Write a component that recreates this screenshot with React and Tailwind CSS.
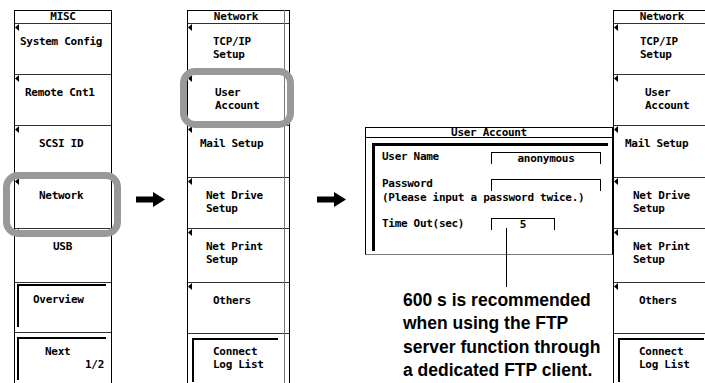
import React from "react";

const mono = "font-['DejaVu_Sans_Mono',monospace] font-bold text-[11px] tracking-[-0.3px] text-black";

const menu1 = [
  { h: "h-[51px]", lines: ["System Config"], pl: "pl-[5px]" },
  { h: "h-[51px]", lines: ["Remote Cnt1"], pl: "pl-[10px]" },
  { h: "h-[52px]", lines: ["SCSI ID"], pl: "pl-[24px]" },
  { h: "h-[51px]", lines: ["Network"], pl: "pl-[24px]" },
  { h: "h-[54px]", lines: ["USB"], pl: "pl-[38px]" },
  { h: "h-[50px]", lines: ["Overview"], button: true, box: "ml-[2px] mt-[1px] mr-[5px] h-[43px]", pl: "pl-[14px] pt-[7px]" },
  { h: "h-[52px]", lines: ["Next"], sub: "1/2", button: true, box: "ml-[2px] mt-[4px] mr-[5px] h-[43px]", pl: "pl-[26px] pr-[2px] pt-[6px]" },
];

const netItems = (shift) => [
  { h: "h-[51px]", lines: ["TCP/IP", "Setup"], pl: shift ? "pl-[26px]" : "pl-[25px]" },
  { h: "h-[51px]", lines: ["User", "Account"], pl: shift ? "pl-[31px]" : "pl-[27px]" },
  { h: "h-[52px]", lines: ["Mail Setup"], pl: shift ? "pl-[11px]" : "pl-[12px]" },
  { h: "h-[51px]", lines: ["Net Drive", "Setup"], pl: shift ? "pl-[19px]" : "pl-[18px]" },
  { h: "h-[54px]", lines: ["Net Print", "Setup"], pl: shift ? "pl-[19px]" : "pl-[18px]" },
  { h: "h-[51px]", lines: ["Others"], pl: "pl-[25px]" },
  {
    h: "h-[52px]",
    lines: ["Connect", "Log List"],
    button: true,
    box: shift ? "ml-[4px] mt-[4px] mr-[6px] h-[44px]" : "ml-[4px] mt-[4px] mr-[11px] h-[44px]",
    pl: "pl-[19px] pt-[5px]",
  },
];

function Marker() {
  return (
    <svg width="4" height="7" viewBox="0 0 4 7" className="absolute left-0 top-0">
      <path d="M0 3.5L4 0V7Z" fill="#000" />
    </svg>
  );
}

function Item({ item }) {
  if (item.button) {
    return (
      <div className={`${item.h} border-t border-[#333]`}>
        <div className={`${item.box} border-t-2 border-l-2 border-black leading-[13px] ${item.pl}`}>
          {item.lines.map((l) => (
            <div key={l} className="whitespace-pre">{l}</div>
          ))}
          {item.sub && <div className="text-right">{item.sub}</div>}
        </div>
      </div>
    );
  }
  return (
    <div className={`relative ${item.h} border-t border-[#333] pt-[11px] leading-[13px] ${item.pl}`}>
      <Marker />
      {item.lines.map((l) => (
        <div key={l} className="whitespace-pre">{l}</div>
      ))}
    </div>
  );
}

function Menu({ title, items, width, hdr, strip }) {
  return (
    <div className={`relative shrink-0 ${width} h-[374px] border-l border-r border-black ${mono}`}>
      <div className={`h-[13px] border-t border-black text-center leading-[12px] ${hdr}`}>{title}</div>
      {items.map((it) => (
        <Item key={it.lines[0]} item={it} />
      ))}
      {strip && <div className="absolute top-0 bottom-0 left-[96px] w-px bg-[#777]" />}
    </div>
  );
}

function Arrow() {
  return (
    <svg width="29" height="15" viewBox="0 0 29 15">
      <rect x="0" y="4.5" width="18" height="6" fill="#000" />
      <path d="M17 0L29 7.5L17 15Z" fill="#000" />
    </svg>
  );
}

function Field({ label, box, value }) {
  return (
    <div className="flex items-start">
      <div className="w-[109px] leading-[13px] whitespace-pre">{label}</div>
      <div className={`${box} h-[12px] border-t border-l border-r border-black text-center leading-[11px]`}>{value}</div>
    </div>
  );
}

export default function App() {
  return (
    <div className="relative w-[705px] h-[383px] overflow-hidden bg-white flex items-start pt-[10px] pl-[14px]">
      <Menu title="MISC" items={menu1} width="w-[98px]" hdr="" />

      <div className="w-[75px] shrink-0 pt-[182px] pl-[24px]">
        <Arrow />
      </div>

      <Menu title="Network" items={netItems(false)} width="w-[103px]" hdr="pr-[5px]" strip />

      <div className="w-[75px] shrink-0 pt-[182px] pl-[27px]">
        <Arrow />
      </div>

      <div className="relative w-[248px] shrink-0 pt-[117px]">
        <div className={`w-[248px] h-[128px] border-l border-t border-r border-black border-b border-b-[#777] flex flex-col ${mono}`}>
          <div className="h-[10px] border-b border-black text-center leading-[9px]">User Account</div>
          <div className="flex-1 ml-[6px] mr-[4px] mt-[5px] mb-[3px] border-t-[3px] border-l-[3px] border-black pl-[7px] pt-[4px]">
            <Field label="User Name" box="mt-[2px] w-[110px]" value="anonymous" />
            <div className="mt-[13px]">
              <Field label="Password" box="mt-[2px] w-[110px]" value="" />
              <div className="leading-[13px] whitespace-pre">(Please input a password twice.)</div>
            </div>
            <div className="mt-[13px]">
              <Field label="Time Out(sec)" box="mt-[1px] w-[64px]" value="5" />
            </div>
          </div>
        </div>
        <div className="absolute left-[141px] top-[218px] h-[59px] w-px bg-black" />
        <div className="mt-[34px] pl-[38px] font-['Liberation_Sans',Arial,sans-serif] font-bold text-[17.5px] leading-[23.3px] text-black whitespace-nowrap">
          <div>600 s is recommended</div>
          <div>when using the FTP</div>
          <div>server function through</div>
          <div>a dedicated FTP client.</div>
        </div>
      </div>

      <Menu title="Network" items={netItems(true)} width="w-[98px]" hdr="" />

      <div className="absolute left-[3px] top-[172px] w-[118px] h-[65px] border-[7px] border-[#999] rounded-[15px]" />
      <div className="absolute left-[180px] top-[68px] w-[114px] h-[60px] border-[7px] border-[#999] rounded-[15px]" />
    </div>
  );
}
